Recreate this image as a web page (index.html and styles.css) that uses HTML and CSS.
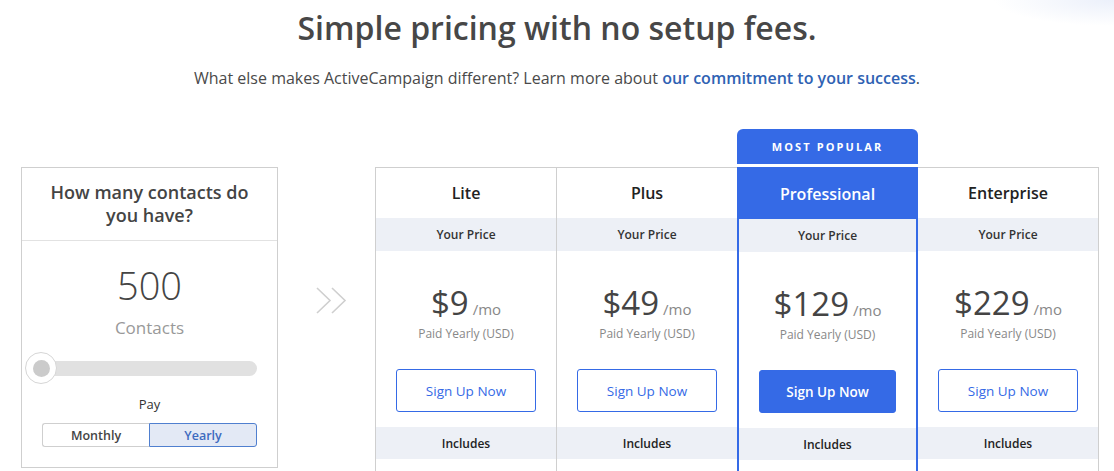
FILE: index.html
```html
<!DOCTYPE html>
<html lang="en">
<head>
<meta charset="utf-8">
<title>Pricing</title>
<link rel="stylesheet" href="styles.css">
</head>
<body>
<div class="glow"></div>
<header class="intro">
  <h1 class="intro-title">Simple pricing with no setup fees.</h1>
  <p class="intro-text">What else makes ActiveCampaign different? Learn more about <a class="intro-link" href="#">our commitment to your success</a>.</p>
</header>
<main class="pricing">
  <section class="contacts-card">
    <h2 class="contacts-question">How many contacts do you have?</h2>
    <div class="contacts-body">
      <div class="contacts-count">500</div>
      <div class="contacts-unit">Contacts</div>
      <div class="slider">
        <div class="slider-track"></div>
        <div class="slider-thumb"><span class="slider-dot"></span></div>
      </div>
      <div class="pay-label">Pay</div>
      <div class="toggle">
        <button class="toggle-opt">Monthly</button>
        <button class="toggle-opt toggle-opt--active">Yearly</button>
      </div>
    </div>
  </section>
  <div class="arrow">
    <svg width="32" height="28" viewBox="0 0 32 28" fill="none" stroke="#cfcfcf" stroke-width="1.6">
      <polyline points="1,1 14,13.5 1,26"/>
      <polyline points="16,1 29,13.5 16,26"/>
    </svg>
  </div>
  <div class="plans">
    <div class="plan">
      <div class="plan-name">Lite</div>
      <div class="plan-label">Your Price</div>
      <div class="plan-price"><span class="amount">$9</span><span class="per">/mo</span></div>
      <div class="plan-note">Paid Yearly (USD)</div>
      <a class="btn" href="#">Sign Up Now</a>
      <div class="plan-label plan-label--inc">Includes</div>
    </div>
    <div class="plan">
      <div class="plan-name">Plus</div>
      <div class="plan-label">Your Price</div>
      <div class="plan-price"><span class="amount">$49</span><span class="per">/mo</span></div>
      <div class="plan-note">Paid Yearly (USD)</div>
      <a class="btn" href="#">Sign Up Now</a>
      <div class="plan-label plan-label--inc">Includes</div>
    </div>
    <div class="plan plan--popular">
      <div class="badge">MOST POPULAR</div>
      <div class="plan-name">Professional</div>
      <div class="plan-label">Your Price</div>
      <div class="plan-price"><span class="amount">$129</span><span class="per">/mo</span></div>
      <div class="plan-note">Paid Yearly (USD)</div>
      <a class="btn btn--solid" href="#">Sign Up Now</a>
      <div class="plan-label plan-label--inc">Includes</div>
    </div>
    <div class="plan plan--last">
      <div class="plan-name">Enterprise</div>
      <div class="plan-label">Your Price</div>
      <div class="plan-price"><span class="amount">$229</span><span class="per">/mo</span></div>
      <div class="plan-note">Paid Yearly (USD)</div>
      <a class="btn" href="#">Sign Up Now</a>
      <div class="plan-label plan-label--inc">Includes</div>
    </div>
  </div>
</main>
</body>
</html>
```
FILE: styles.css
```css
* { box-sizing: border-box; }
html, body { margin: 0; padding: 0; }
body {
  background: #fff;
  font-family: "Open Sans", "Noto Sans", sans-serif;
  color: #444;
  overflow: hidden;
  position: relative;
  height: 471px;
}
.glow {
  position: absolute;
  top: 0;
  right: 0;
  width: 240px;
  height: 40px;
  background: radial-gradient(ellipse 120px 26px at 100% 0, rgba(222, 230, 247, 0.6), rgba(222, 230, 247, 0) 100%);
}
.intro { text-align: center; }
.intro-title {
  margin: 6px 0 0;
  font-size: 32px;
  line-height: 44px;
  font-weight: 600;
  color: #474747;
}
.intro-text {
  margin: 16px 0 0;
  font-size: 16px;
  line-height: 24px;
  color: #4a4a4a;
}
.intro-link {
  color: #2f62b3;
  font-weight: 600;
  text-decoration: none;
}
.pricing {
  display: flex;
  align-items: flex-start;
  margin-top: 77px;
  padding-left: 21px;
}
/* left card */
.contacts-card {
  width: 257px;
  height: 301px;
  border: 1px solid #cfcfcf;
  text-align: center;
}
.contacts-question {
  margin: 0;
  height: 73px;
  padding: 13px 20px 0;
  border-bottom: 1px solid #e2e2e2;
  font-size: 18px;
  line-height: 23px;
  font-weight: 600;
  color: #444;
}
.contacts-body { padding: 22px 0 0; }
.contacts-count {
  font-size: 38px;
  line-height: 44px;
  font-weight: 300;
  color: #444;
}
.contacts-unit {
  margin-top: 10px;
  font-size: 17px;
  line-height: 22px;
  color: #999;
}
.slider {
  position: relative;
  height: 32px;
  padding-top: 9px;
  margin: 13px 20px 0 3px;
}
.slider-track {
  margin-left: 2px;
  height: 15px;
  border-radius: 8px;
  background: #e1e1e1;
}
.slider-thumb {
  position: absolute;
  left: 0;
  top: 0;
  width: 32px;
  height: 32px;
  border-radius: 50%;
  background: #fff;
  border: 1px solid #d6d6d6;
  display: flex;
  align-items: center;
  justify-content: center;
}
.slider-dot {
  width: 17px;
  height: 17px;
  border-radius: 50%;
  background: #cbcbcb;
}
.pay-label {
  margin-top: 11px;
  font-size: 13px;
  line-height: 18px;
  color: #333;
}
.toggle {
  display: flex;
  margin: 10px 20px 0;
  height: 24px;
}
.toggle-opt {
  flex: 1;
  font-family: inherit;
  font-size: 12.5px;
  font-weight: 600;
  padding: 0;
  background: #fff;
  color: #444;
  border: 1px solid #cfcfcf;
  border-right: 0;
  border-radius: 3px 0 0 3px;
}
.toggle-opt--active {
  background: #e3e9f5;
  color: #3d6bbf;
  border: 1px solid #4f7fcf;
  border-radius: 0 3px 3px 0;
}
/* arrow */
.arrow {
  width: 97px;
  padding-top: 120px;
  display: flex;
  justify-content: center;
}
.arrow svg { margin-left: 10px; }
/* plans */
.plans {
  display: flex;
  align-items: stretch;
}
.plan {
  position: relative;
  width: 181px;
  height: 320px;
  border-top: 1px solid #cfcfcf;
  border-left: 1px solid #cfcfcf;
  display: flex;
  flex-direction: column;
  text-align: center;
}
.plan--popular {
  border: 2px solid #356ae6;
  border-bottom: 0;
}
.plan--last {
  border-left: 0;
  border-right: 1px solid #cfcfcf;
}
.badge {
  position: absolute;
  top: -40px;
  left: -2px;
  right: -2px;
  height: 35px;
  border-radius: 6px 6px 0 0;
  background: #356ae6;
  color: #fff;
  font-size: 11px;
  font-weight: 700;
  letter-spacing: 2.1px;
  display: flex;
  align-items: center;
  justify-content: center;
}
.plan-name {
  height: 50px;
  display: flex;
  align-items: center;
  justify-content: center;
  font-size: 16px;
  font-weight: 600;
  color: #222;
}
.plan--popular .plan-name {
  background: #356ae6;
  color: #fff;
}
.plan-label {
  height: 33px;
  display: flex;
  align-items: center;
  justify-content: center;
  background: #edf0f6;
  font-size: 12px;
  font-weight: 600;
  color: #333;
}
.plan-label--inc {
  margin-top: 15px;
  height: 32px;
  font-size: 12px;
  color: #222;
}
.plan-price {
  padding-top: 32px;
  height: 72px;
  font-size: 33px;
  line-height: 40px;
  white-space: nowrap;
}
.amount {
  font-size: 33px;
  color: #444;
}
.per {
  margin-left: 4px;
  font-size: 15px;
  line-height: 1;
  color: #888;
}
.plan-note {
  margin-top: 3px;
  font-size: 12px;
  line-height: 16px;
  color: #888;
}
.btn {
  margin: 27px 20px 0;
  height: 43px;
  border: 1px solid #356ae6;
  border-radius: 3px;
  display: flex;
  align-items: center;
  justify-content: center;
  font-size: 13.5px;
  color: #356ae6;
  text-decoration: none;
}
.btn--solid {
  background: #356ae6;
  color: #fff;
  font-weight: 600;
}
```
